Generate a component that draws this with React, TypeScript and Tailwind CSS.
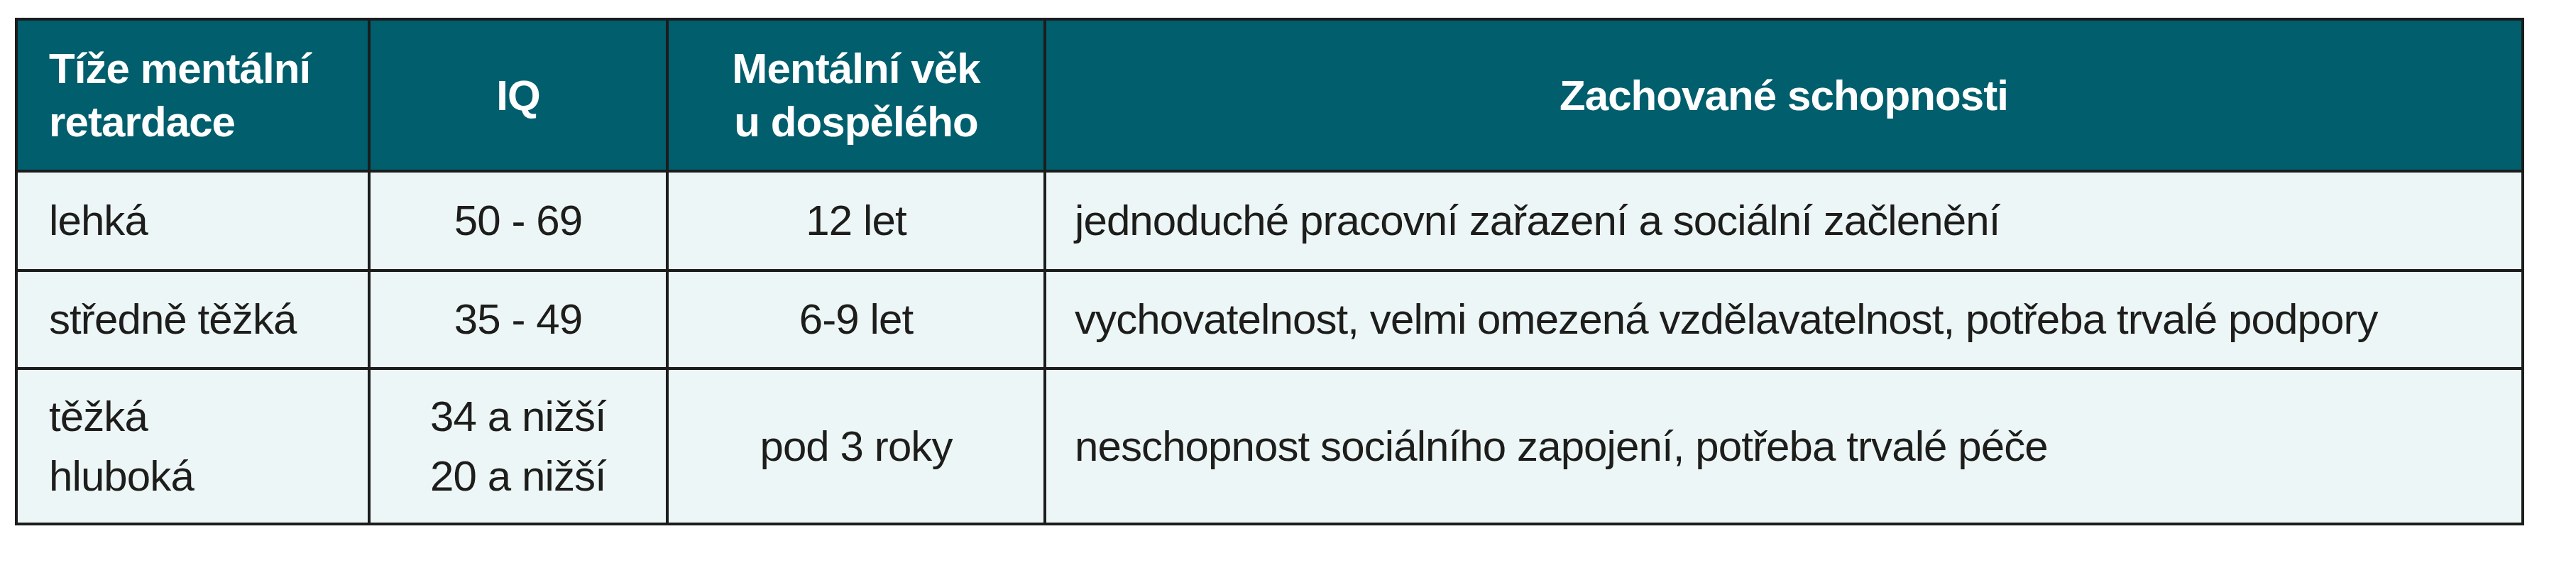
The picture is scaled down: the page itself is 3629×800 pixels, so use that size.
const rows = [
  {
    severity: ["lehká"],
    iq: ["50 - 69"],
    age: "12 let",
    skills: "jednoduché pracovní zařazení a sociální začlenění",
  },
  {
    severity: ["středně těžká"],
    iq: ["35 - 49"],
    age: "6-9 let",
    skills: "vychovatelnost, velmi omezená vzdělavatelnost, potřeba trvalé podpory",
  },
  {
    severity: ["těžká", "hluboká"],
    iq: ["34 a nižší", "20 a nižší"],
    age: "pod 3 roky",
    skills: "neschopnost sociálního zapojení, potřeba trvalé péče",
  },
];

const head = "flex flex-col justify-center bg-[#005e6d] text-white font-bold leading-[75px]";
const cell = "flex flex-col justify-center bg-[#edf6f6] text-[#1d1d1b] leading-[84px]";

export default function App() {
  return (
    <div className="min-h-[800px] bg-white pl-[21px] pt-[25px] font-['Liberation_Sans',Arial,sans-serif] text-[60px] tracking-[-0.015em]">
      <div className="grid w-[3535px] grid-cols-[493px_416px_528px_2078px] grid-rows-[210px_136px_134px_215px] gap-[4px] bg-[#1b1c1c] p-[4px]">
        <div className={`${head} pl-[44px]`}>
          <span>Tíže mentální</span>
          <span>retardace</span>
        </div>
        <div className={`${head} items-center`}>IQ</div>
        <div className={`${head} items-center`}>
          <span>Mentální věk</span>
          <span>u dospělého</span>
        </div>
        <div className={`${head} items-center`}>Zachované schopnosti</div>

        {rows.map((r) => (
          <div key={r.age} className="contents">
            <div className={`${cell} pl-[44px]`}>
              {r.severity.map((s) => (
                <span key={s}>{s}</span>
              ))}
            </div>
            <div className={`${cell} items-center`}>
              {r.iq.map((s) => (
                <span key={s}>{s}</span>
              ))}
            </div>
            <div className={`${cell} items-center`}>{r.age}</div>
            <div className={`${cell} pl-[40px]`}>{r.skills}</div>
          </div>
        ))}
      </div>
    </div>
  );
}
